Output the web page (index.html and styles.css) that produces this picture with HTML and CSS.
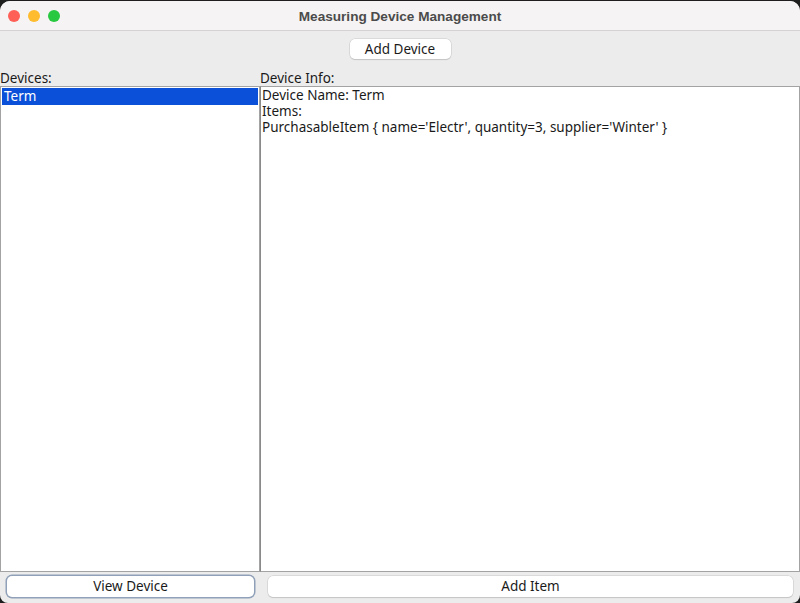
FILE: index.html
```html
<!DOCTYPE html>
<html>
<head>
<meta charset="utf-8">
<link rel="stylesheet" href="styles.css">
</head>
<body>
<div class="window">
  <div class="titlebar">
    <div class="lights">
      <span class="light red"></span>
      <span class="light yellow"></span>
      <span class="light green"></span>
    </div>
    <div class="title">Measuring Device Management</div>
  </div>
  <div class="content">
    <div class="top">
      <button class="btn">Add Device</button>
    </div>
    <div class="panes">
      <div class="pane left">
        <div class="label">Devices:</div>
        <div class="box list">
          <div class="row selected">Term</div>
        </div>
      </div>
      <div class="pane right">
        <div class="label">Device Info:</div>
        <div class="box info">
          <div class="line">Device Name: Term</div>
          <div class="line">Items:</div>
          <div class="line">PurchasableItem { name='Electr', quantity=3, supplier='Winter' }</div>
        </div>
      </div>
    </div>
    <div class="bottom">
      <button class="btn wide focused view">View Device</button>
      <button class="btn wide add">Add Item</button>
    </div>
  </div>
</div>
</body>
</html>
```

FILE: styles.css
```css
html, body {
  margin: 0;
  padding: 0;
  width: 800px;
  height: 603px;
  overflow: hidden;
  background: #1e1e1e;
}
.window {
  width: 800px;
  height: 602px;
  margin-top: 1px;
  background: #ececec;
  border-radius: 10px 10px 8px 8px;
  overflow: hidden;
  display: flex;
  flex-direction: column;
  font-family: "Noto Sans", sans-serif;
  font-size: 13.5px;
  color: #1a1a1a;
}
.titlebar {
  height: 29px;
  flex: none;
  background: #f5f3f3;
  border-bottom: 1px solid #d4d2d2;
  position: relative;
  display: flex;
  align-items: center;
  justify-content: center;
}
.lights {
  position: absolute;
  left: 8px;
  top: 9px;
  display: flex;
  gap: 8px;
}
.light {
  width: 12px;
  height: 12px;
  border-radius: 50%;
  display: block;
}
.red { background: #fe5f57; }
.yellow { background: #febc2e; }
.green { background: #28c840; }
.title {
  font-family: "Liberation Sans", "Open Sans", sans-serif;
  font-weight: bold;
  font-size: 13.6px;
  color: #4b4b4b;
  padding-top: 1px;
}
.content {
  flex: 1;
  display: flex;
  flex-direction: column;
}
.top {
  height: 38px;
  display: flex;
  justify-content: center;
  padding-top: 8px;
  box-sizing: border-box;
}
.btn {
  font-family: "Noto Sans", sans-serif;
  font-size: 13.5px;
  color: #1a1a1a;
  background: #ffffff;
  border: none;
  border-radius: 5px;
  box-shadow: 0 0 0 0.5px #c8c8c8, 0 1px 1px rgba(0,0,0,0.18);
  height: 20px;
  line-height: 20px;
  padding: 0;
  margin: 0;
}
.top .btn {
  width: 101px;
}
.panes {
  flex: 1;
  display: flex;
  min-height: 0;
}
.pane {
  display: flex;
  flex-direction: column;
}
.left { width: 260px; }
.right { flex: 1; }
.label {
  height: 16px;
  line-height: 16px;
  margin-top: 1px;
}
.box {
  flex: 1;
  background: #ffffff;
  border: 1px solid #a3a3a3;
  box-sizing: border-box;
}
.right .box { border-left: 1px solid #8a8a8a; padding: 0 1px; }
.list { padding: 1px; }
.row {
  height: 17px;
  line-height: 17px;
  padding-left: 2px;
}
.selected {
  background: #0b50d8;
  color: #ffffff;
}
.line {
  height: 16px;
  line-height: 16px;
}
.info { padding-top: 3px; }
.bottom {
  height: 31px;
  flex: none;
  display: flex;
  gap: 14px;
  padding: 4px 7px 0 7px;
  box-sizing: border-box;
}
.bottom .btn {
  height: 21px;
  line-height: 21px;
}
.view { width: 247px; }
.add { flex: 1; }
.focused {
  box-shadow: 0 0 0 1.5px #8fa0b8;
}
```
